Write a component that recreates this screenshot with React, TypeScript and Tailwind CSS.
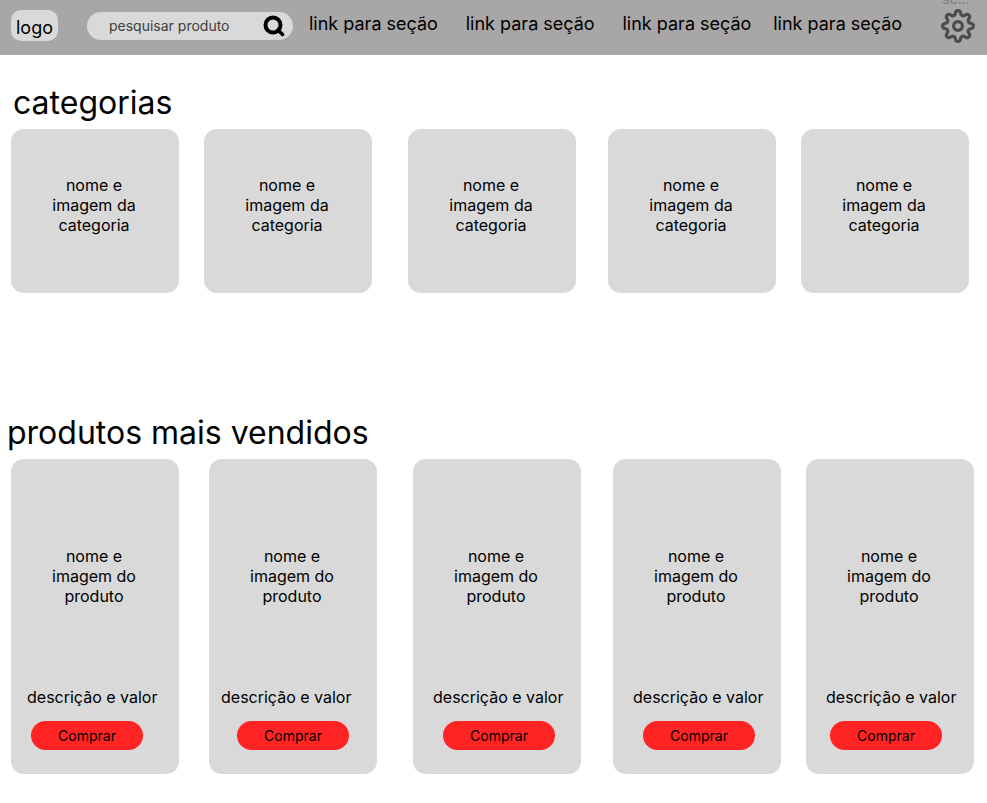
const sections = ["ofertas", "novidades", "marcas", "contato"];
const categories = [1, 2, 3, 4, 5];

const products = [
  { id: 1, text: "pl-4", button: "ml-5" },
  { id: 2, text: "pl-3", button: "ml-7" },
  { id: 3, text: "pl-5", button: "ml-[30px]" },
  { id: 4, text: "pl-5", button: "ml-[30px]" },
  { id: 5, text: "pl-5", button: "ml-6" },
];

// Eight rounded teeth: the radius swings between tooth and valley as the angle turns.
const gearOutline =
  Array.from({ length: 160 }, (_, i) => {
    const angle = (i / 160) * Math.PI * 2;
    const radius = 13.3 + 2.2 * Math.tanh(1.6 * Math.cos(8 * angle));
    const x = 18 + radius * Math.cos(angle);
    const y = 18 + radius * Math.sin(angle);
    return `${i === 0 ? "M" : "L"}${x.toFixed(2)} ${y.toFixed(2)}`;
  }).join(" ") + " Z";

function GearIcon() {
  return (
    <svg viewBox="0 0 36 36" className="size-9" fill="none" stroke="currentColor" strokeWidth="3.2" strokeLinejoin="round" aria-hidden="true">
      <path d={gearOutline} />
      <circle cx="18" cy="18" r="4.4" />
    </svg>
  );
}

function SearchIcon() {
  return (
    <svg viewBox="0 0 22 22" className="size-[22px]" fill="none" stroke="black" strokeWidth="4" aria-hidden="true">
      <circle cx="10" cy="10" r="7.5" />
      <path d="M15 15 L19.5 19.5" strokeLinecap="round" strokeWidth="3.6" />
    </svg>
  );
}

function Header() {
  return (
    <header className="flex h-[55px] items-start bg-[#a8a6a6] pl-[11px] pr-[11px]">
      <a href="#inicio" className="mt-[10px] flex h-[31px] w-[47px] shrink-0 items-center justify-center rounded-[10px] bg-[#d9d9d9] pt-1 text-lg leading-6">
        logo
      </a>
      <form role="search" className="ml-[29px] mt-3 flex h-7 w-[206px] shrink-0 items-center rounded-full bg-[#d9d9d9] pl-[22px] pr-2">
        <input
          type="text"
          aria-label="pesquisar produto"
          placeholder="pesquisar produto"
          className="min-w-0 flex-1 bg-transparent text-sm text-black outline-none placeholder:text-[#3d3d3d]"
        />
        <button type="button" aria-label="Buscar">
          <SearchIcon />
        </button>
      </form>
      <nav className="ml-4 mt-3 grid flex-1 grid-cols-[157fr_157fr_151fr_167fr] text-lg leading-6">
        {sections.map((section) => (
          <a key={section} href={`#${section}`} className="whitespace-nowrap">
            link para seção
          </a>
        ))}
      </nav>
      <button type="button" aria-label="Configurações" className="relative mt-2 shrink-0 text-[#4d4d4d]">
        <GearIcon />
        <span className="absolute -top-[17px] left-0.5 text-sm leading-4 text-[#807e7e]">se...</span>
      </button>
    </header>
  );
}

export default function App() {
  return (
    <div className="min-h-screen bg-white font-['Inter',sans-serif] text-black">
      <Header />
      <main>
        <section className="pl-[11px] pr-[18px] pt-7">
          <h1 className="ml-0.5 text-[32px] leading-10">categorias</h1>
          <div className="mt-[6px] grid grid-cols-[193fr_204fr_200fr_193fr_168fr]">
            {categories.map((id) => (
              <article key={id} className="flex h-[164px] w-[168px] items-start justify-center rounded-[13px] bg-[#d9d9d9] pr-0.5 pt-[46px]">
                <p className="w-24 text-center text-base leading-5">nome e imagem da categoria</p>
              </article>
            ))}
          </div>
        </section>
        <section className="pb-7 pl-[11px] pr-[13px] pt-[120px]">
          <h2 className="-ml-1 text-[32px] leading-10">produtos mais vendidos</h2>
          <div className="mt-[6px] grid grid-cols-[198fr_204fr_200fr_193fr_168fr]">
            {products.map((product) => (
              <article key={product.id} className="flex h-[315px] w-[168px] flex-col items-start rounded-[13px] bg-[#d9d9d9] pb-6 pt-[87px]">
                <p className="w-full px-9 pr-[38px] text-center text-base leading-5">nome e imagem do produto</p>
                <p className={`mt-auto text-base leading-5 ${product.text}`}>descrição e valor</p>
                <button type="button" className={`mt-[14px] h-[29px] w-28 shrink-0 rounded-full bg-[#ff2323] text-sm ${product.button}`}>
                  Comprar
                </button>
              </article>
            ))}
          </div>
        </section>
      </main>
    </div>
  );
}
